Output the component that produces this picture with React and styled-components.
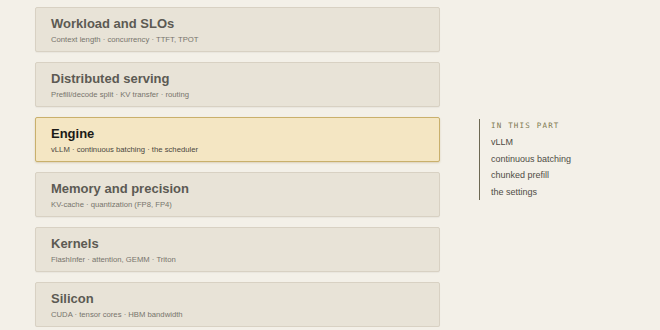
import React from "react";
import styled, { createGlobalStyle } from "styled-components";

const Global = createGlobalStyle`
  html, body { margin: 0; padding: 0; background: #f3f0e8; }
  body { font-family: "Liberation Sans", Arial, sans-serif; }
`;

const Page = styled.div`
  display: flex;
  align-items: flex-start;
  padding: 7px 0 0 35px;
  gap: 39px;
`;

const Stack = styled.div`
  display: flex;
  flex-direction: column;
  gap: 10px;
  width: 405px;
`;

const Card = styled.div`
  box-sizing: border-box;
  height: 45px;
  padding: 8px 15px 0;
  border: 1px solid ${(p) => (p.$active ? "#c9b06c" : "#d8d1c3")};
  background: ${(p) => (p.$active ? "#f4e6c3" : "#e8e3d7")};
  border-radius: 2px;
  box-shadow: ${(p) => (p.$active ? "0 1px 2px rgba(150,120,50,0.25)" : "0 1px 1px rgba(0,0,0,0.04)")};
`;

const Title = styled.div`
  font-size: 13px;
  font-weight: 700;
  line-height: 16px;
  color: ${(p) => (p.$active ? "#1b1a17" : "#5c5a53")};
`;

const Sub = styled.div`
  margin-top: 3px;
  font-size: 7.7px;
  line-height: 10px;
  color: ${(p) => (p.$active ? "#4a4740" : "#77746c")};
`;

const Aside = styled.div`
  margin-top: 112px;
  border-left: 1px solid #6c6852;
  padding: 2px 0 0 11px;
  display: flex;
  flex-direction: column;
`;

const Label = styled.div`
  font-family: "DejaVu Sans Mono", "Liberation Mono", monospace;
  font-size: 7.5px;
  letter-spacing: 1.2px;
  color: #7e7a50;
  line-height: 10px;
  margin-bottom: 3px;
`;

const Item = styled.div`
  font-size: 9px;
  line-height: 16.5px;
  color: #4f4c45;
`;

const parts = [
  ["Workload and SLOs", "Context length · concurrency · TTFT, TPOT"],
  ["Distributed serving", "Prefill/decode split · KV transfer · routing"],
  ["Engine", "vLLM · continuous batching · the scheduler", true],
  ["Memory and precision", "KV-cache · quantization (FP8, FP4)"],
  ["Kernels", "FlashInfer · attention, GEMM · Triton"],
  ["Silicon", "CUDA · tensor cores · HBM bandwidth"],
];

export default function App() {
  return (
    <>
      <Global />
      <Page>
        <Stack>
          {parts.map(([t, s, a]) => (
            <Card key={t} $active={a}>
              <Title $active={a}>{t}</Title>
              <Sub $active={a}>{s}</Sub>
            </Card>
          ))}
        </Stack>
        <Aside>
          <Label>IN THIS PART</Label>
          <Item>vLLM</Item>
          <Item>continuous batching</Item>
          <Item>chunked prefill</Item>
          <Item>the settings</Item>
        </Aside>
      </Page>
    </>
  );
}
